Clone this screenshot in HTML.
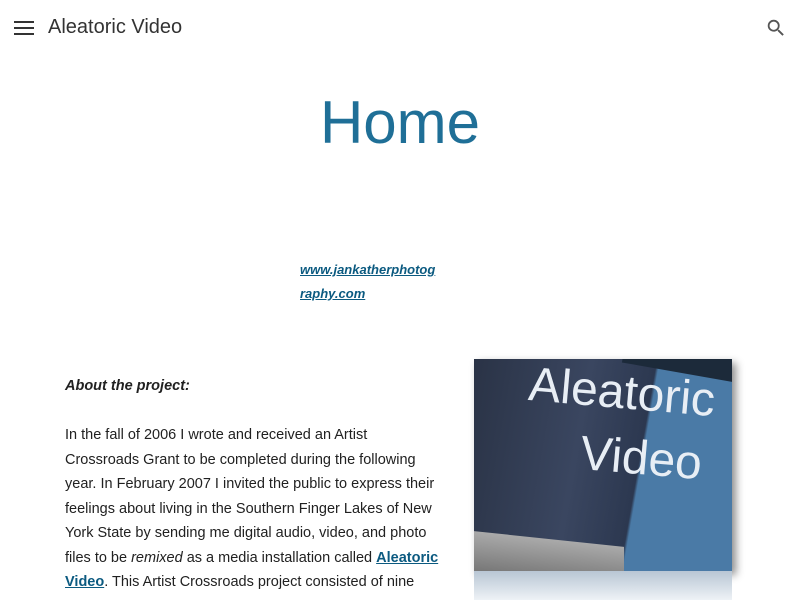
<!DOCTYPE html>
<html><head><meta charset="utf-8"><style>
body{margin:0;width:800px;height:600px;overflow:hidden;background:#fff;font-family:"Liberation Sans",sans-serif;position:relative}
.hdr{position:absolute;left:48px;top:16px;font-size:20px;color:#333;font-weight:300}
.h1{position:absolute;left:0;width:800px;top:88px;text-align:center;font-size:60px;color:#1f6f97;font-weight:300}
.lnk{position:absolute;left:300px;top:258px;font-size:13px;line-height:24px;font-weight:bold;font-style:italic;color:#0b5a80;text-decoration:underline}
.txt{position:absolute;left:65px;top:374px;width:375px;font-size:14.5px;line-height:24.5px;color:#212121}
a{color:#0b5a80;font-weight:bold}
</style></head><body>
<svg style="position:absolute;left:14px;top:20px" width="20" height="16"><rect y="1" width="20" height="2" fill="#333"/><rect y="7" width="20" height="2" fill="#333"/><rect y="13" width="20" height="2" fill="#333"/></svg>
<div class="hdr">Aleatoric Video</div>
<svg style="position:absolute;left:765px;top:17px" width="22" height="22" viewBox="0 0 24 24"><path fill="#555" d="M15.5 14h-.79l-.28-.27A6.47 6.470 0 0016 9.5 6.5 6.5 0 109.5 16c1.61 0 3.09-.59 4.23-1.57l.27.28v.79l5 4.99L20.49 19l-4.99-5zm-6 0C7.01 14 5 11.99 5 9.5S7.01 5 9.5 5 14 7.01 14 9.5 11.99 14 9.5 14z"/></svg>
<div class="h1">Home</div>
<div class="lnk">www.jankatherphotog<br>raphy.com</div>
<div class="txt"><b><i>About the project:</i></b><br><br>In the fall of 2006 I wrote and received an Artist Crossroads Grant to be completed during the following year. In February 2007 I invited the public to express their feelings about living in the Southern Finger Lakes of New York State by sending me digital audio, video, and photo files to be <i>remixed</i> as a media installation called <a href="#">Aleatoric Video</a>. This Artist Crossroads project consisted of nine</div>
<div style="position:absolute;left:474px;top:359px;width:258px;height:212px;background:linear-gradient(100deg,#2a3346 0%,#3a4660 40%,#2c3850 62%,#4a7aa6 63%,#4a7aa6 100%);box-shadow:4px 4px 8px rgba(0,0,0,.45);overflow:hidden">
<div style="position:absolute;left:150px;top:-20px;width:130px;height:35px;background:#1c2a3a;transform:rotate(10deg)"></div>
<div style="position:absolute;left:0;top:180px;width:150px;height:40px;background:linear-gradient(#aaa,#777);transform:skewY(6deg)"></div>
<div style="position:absolute;left:40px;top:2px;color:#e8eef5;font-size:48px;line-height:64px;width:210px;text-align:center;transform:rotate(5deg)">Aleatoric<br><span style="margin-left:50px">Video</span></div>
</div>
<div style="position:absolute;left:474px;top:571px;width:258px;height:29px;background:linear-gradient(#b8c6d4,#eef2f6)"></div>
</body></html>
